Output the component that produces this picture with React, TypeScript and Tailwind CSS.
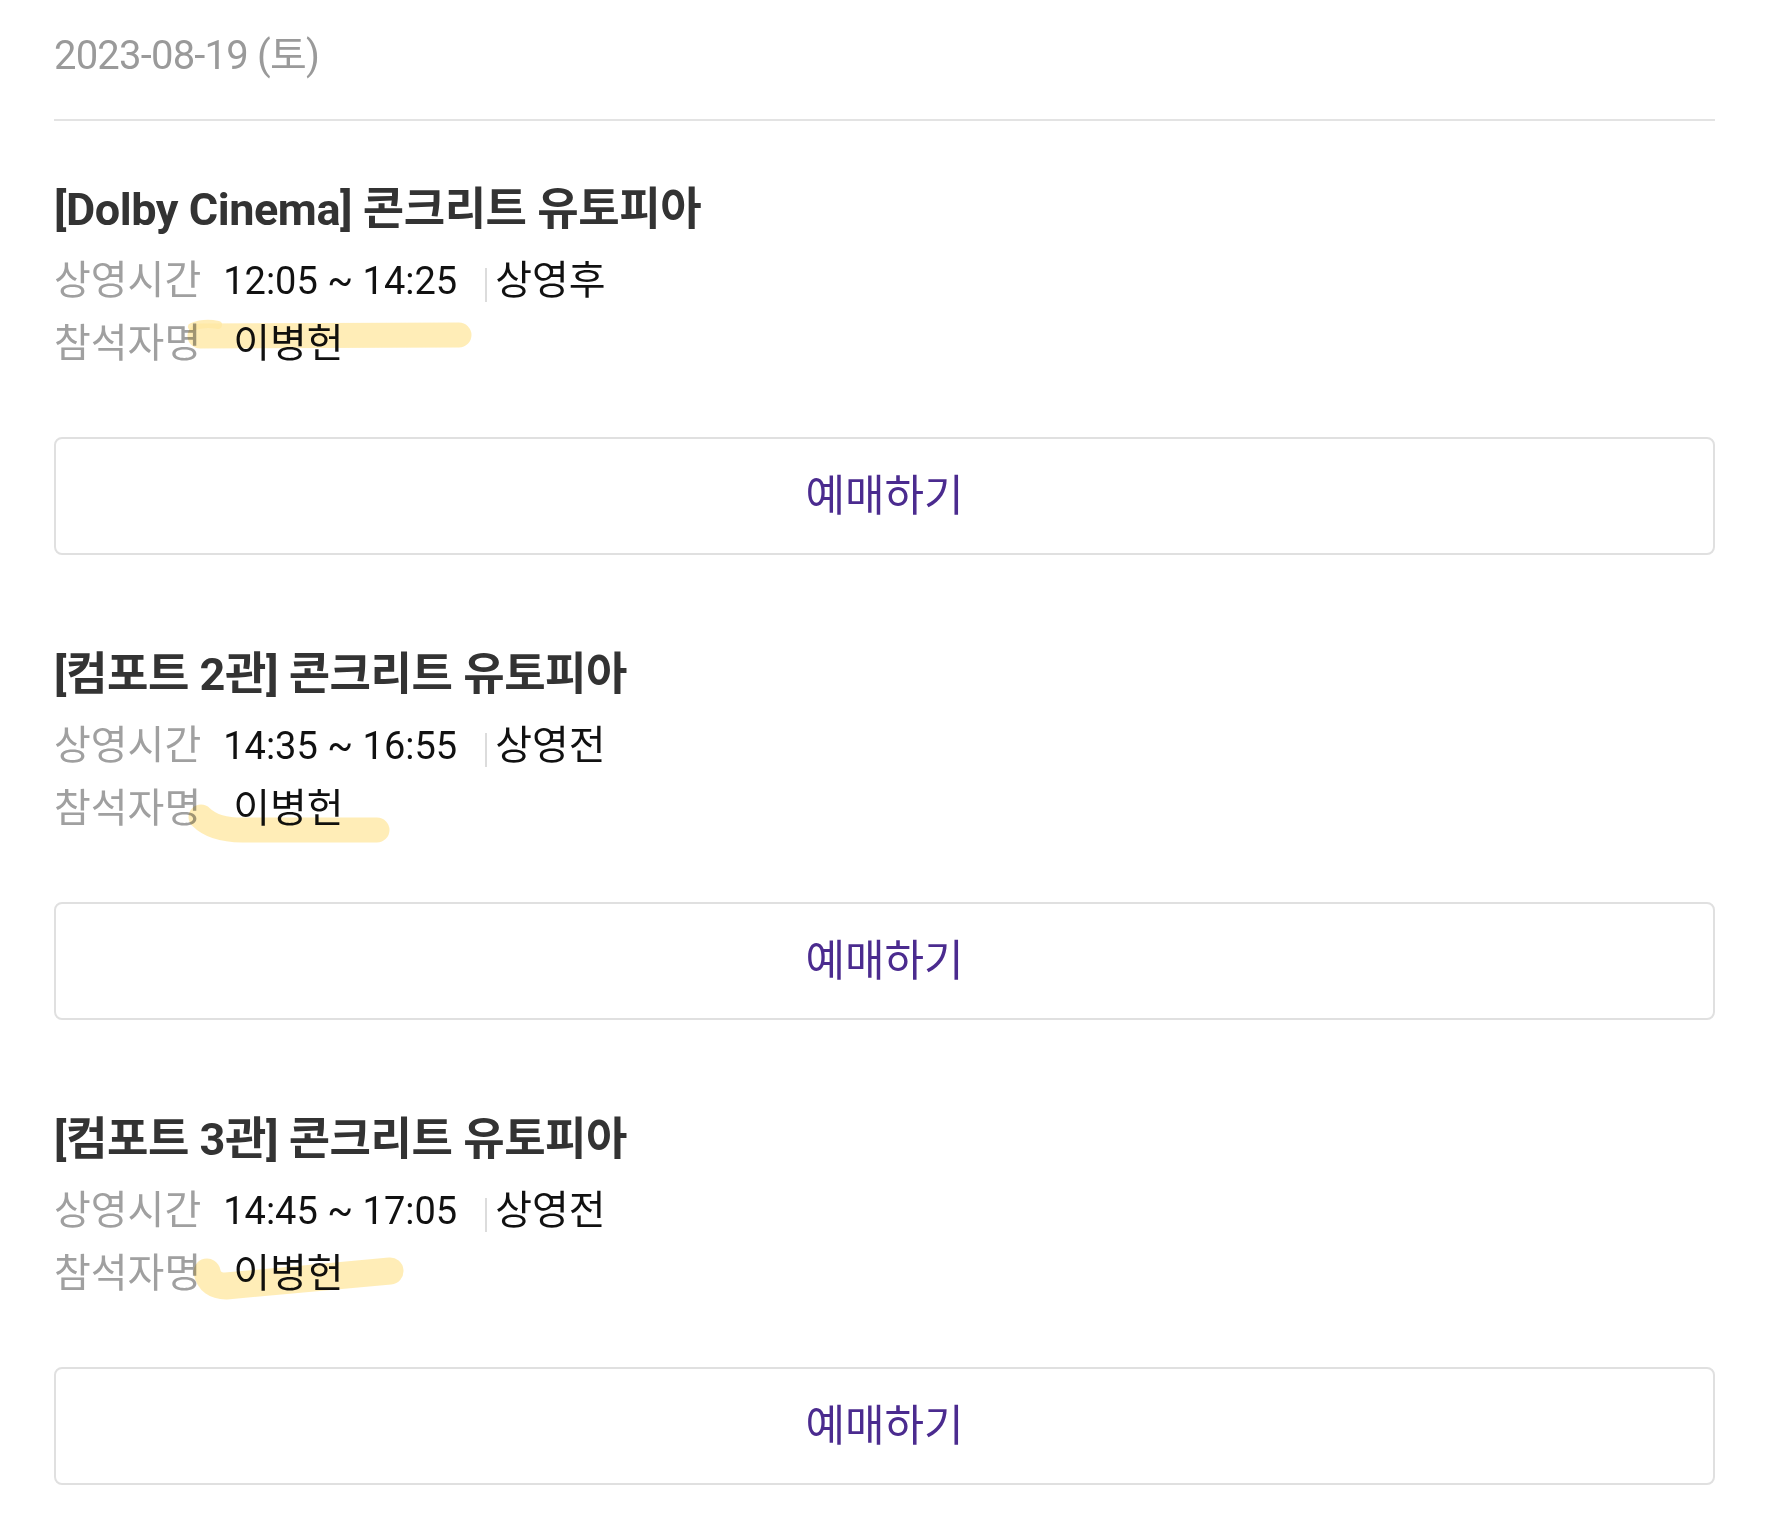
import type { ReactNode } from 'react'

type Showtime = {
  hall: string
  start: string
  end: string
  status: string
  attendee: string
}

const showtimes: Showtime[] = [
  { hall: 'Dolby Cinema', start: '12:05', end: '14:25', status: '상영후', attendee: '이병헌' },
  { hall: '컴포트 2관', start: '14:35', end: '16:55', status: '상영전', attendee: '이병헌' },
  { hall: '컴포트 3관', start: '14:45', end: '17:05', status: '상영전', attendee: '이병헌' },
]

// hand drawn highlighter strokes, one per card (coords relative to the name row)
const marks: ReactNode[] = [
  <>
    <path d="M146 25 L405 24" strokeWidth={25} />
    <path d="M138 16 Q150 11 164 14" strokeWidth={8} />
  </>,
  <path d="M147 41 Q160 54 188 54 L323 54" strokeWidth={25} />,
  <path d="M153 31 Q156 45 172 45 L336 30" strokeWidth={27} />,
]

const Highlight = ({ index }: { index: number }) => (
  <svg
    className="pointer-events-none absolute left-0 top-0 h-[80px] w-[440px] overflow-visible mix-blend-multiply"
    viewBox="0 0 440 80"
    fill="none"
    stroke="#ffe8a3"
    strokeLinecap="round"
    strokeLinejoin="round"
    strokeOpacity={0.78}
  >
    {marks[index]}
  </svg>
)

const ShowtimeCard = ({ item, index }: { item: Showtime; index: number }) => (
  <section>
    <h2 className="h-[50px] text-[45px] font-bold leading-[50px] tracking-[-0.01em] text-[#333333]">
      [{item.hall}] 콘크리트 유토피아
    </h2>

    <div className="mt-[16px]">
      <div className="flex h-[60px] items-center">
        <span className="text-[40px] leading-none text-[#a0a0a0]">상영시간</span>
        <span className="ml-[22px] text-[38px] leading-none text-[#111111]">
          {item.start} ~ {item.end}
        </span>
        <span className="ml-[28px] mt-[8px] h-[34px] w-[2px] bg-[#dcdcdc]" />
        <span className="ml-[8px] text-[40px] leading-none text-[#111111]">{item.status}</span>
      </div>

      <div className="relative flex h-[66px] items-center">
        <span className="text-[40px] leading-none text-[#a0a0a0]">참석자명</span>
        <span className="ml-[32px] text-[40px] leading-none text-[#111111]">{item.attendee}</span>
        <Highlight index={index} />
      </div>
    </div>

    <button
      type="button"
      className="mt-[60px] flex h-[118px] w-full items-center justify-center rounded-[8px] border-2 border-[#e0e0e0] bg-white text-[43px] leading-none text-[#4b2b8f]"
    >
      예매하기
    </button>
  </section>
)

const App = () => {
  return (
    <div className="min-h-[1529px] bg-white pl-[54px] pr-[52px] font-['Roboto','Noto_Sans_CJK_KR',sans-serif]">
      <header className="border-b-2 border-[#e3e3e3] pb-[40px] pt-[32px]">
        <p className="h-[47px] text-[40px] leading-[47px] tracking-[-0.02em] text-[#9a9a9a]">2023-08-19 (토)</p>
      </header>

      <div className="flex flex-col gap-[95px] pt-[64px]">
        {showtimes.map((item, index) => (
          <ShowtimeCard key={item.hall} item={item} index={index} />
        ))}
      </div>
    </div>
  )
}

export default App
